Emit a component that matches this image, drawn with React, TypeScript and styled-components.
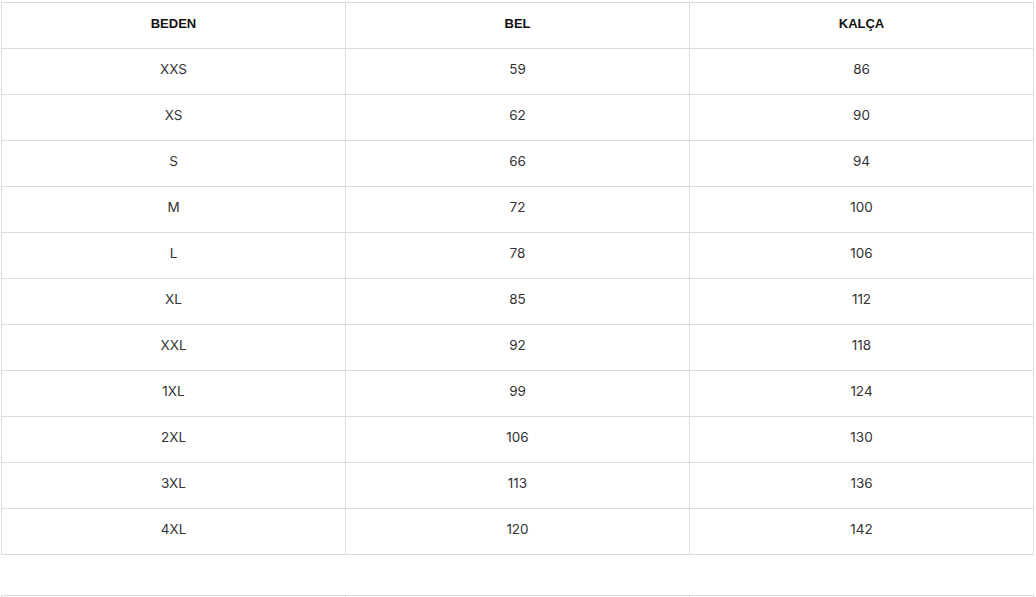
import React from "react";
import styled, { createGlobalStyle } from "styled-components";

const GlobalStyle = createGlobalStyle`
  html, body {
    margin: 0;
    padding: 0;
    background: #ffffff;
  }
`;

const Page = styled.div`
  padding: 2px 0 0 1px;
  height: 597px;
  overflow: hidden;
  box-sizing: border-box;
  display: flex;
  flex-direction: column;
  gap: 40px;
`;

const Table = styled.table`
  width: 1033px;
  flex-shrink: 0;
  table-layout: fixed;
  border-collapse: separate;
  border-spacing: 0;
  border-top: 1px solid #dcdcdc;
  border-left: 1px solid #dcdcdc;
`;

const HeadCell = styled.th`
  height: 46px;
  padding: 0 0 5px;
  border-right: 1px solid #dcdcdc;
  border-bottom: 1px solid #dcdcdc;
  font-family: "Liberation Sans", Arial, sans-serif;
  font-size: 13px;
  font-weight: 700;
  color: #111111;
  text-align: center;
  box-sizing: border-box;
`;

const Cell = styled.td`
  height: 46px;
  padding: 0 0 5px;
  border-right: 1px solid #dcdcdc;
  border-bottom: 1px solid #dcdcdc;
  font-family: Inter, "Liberation Sans", sans-serif;
  font-size: 13.5px;
  font-weight: 400;
  color: #333333;
  text-align: center;
  box-sizing: border-box;
`;

type SizeRow = {
  size: string;
  waist: number;
  hip: number;
};

const rows: SizeRow[] = [
  { size: "XXS", waist: 59, hip: 86 },
  { size: "XS", waist: 62, hip: 90 },
  { size: "S", waist: 66, hip: 94 },
  { size: "M", waist: 72, hip: 100 },
  { size: "L", waist: 78, hip: 106 },
  { size: "XL", waist: 85, hip: 112 },
  { size: "XXL", waist: 92, hip: 118 },
  { size: "1XL", waist: 99, hip: 124 },
  { size: "2XL", waist: 106, hip: 130 },
  { size: "3XL", waist: 113, hip: 136 },
  { size: "4XL", waist: 120, hip: 142 },
];

const SizeTable = () => (
  <Table>
    <thead>
      <tr>
        <HeadCell>BEDEN</HeadCell>
        <HeadCell>BEL</HeadCell>
        <HeadCell>KALÇA</HeadCell>
      </tr>
    </thead>
    <tbody>
      {rows.map((r) => (
        <tr key={r.size}>
          <Cell>{r.size}</Cell>
          <Cell>{r.waist}</Cell>
          <Cell>{r.hip}</Cell>
        </tr>
      ))}
    </tbody>
  </Table>
);

// the next table only shows its top edge in the frame
const NextTable = () => (
  <Table>
    <tbody>
      <tr>
        <Cell />
        <Cell />
        <Cell />
      </tr>
    </tbody>
  </Table>
);

export default function App() {
  return (
    <>
      <GlobalStyle />
      <Page>
        <SizeTable />
        <NextTable />
      </Page>
    </>
  );
}
